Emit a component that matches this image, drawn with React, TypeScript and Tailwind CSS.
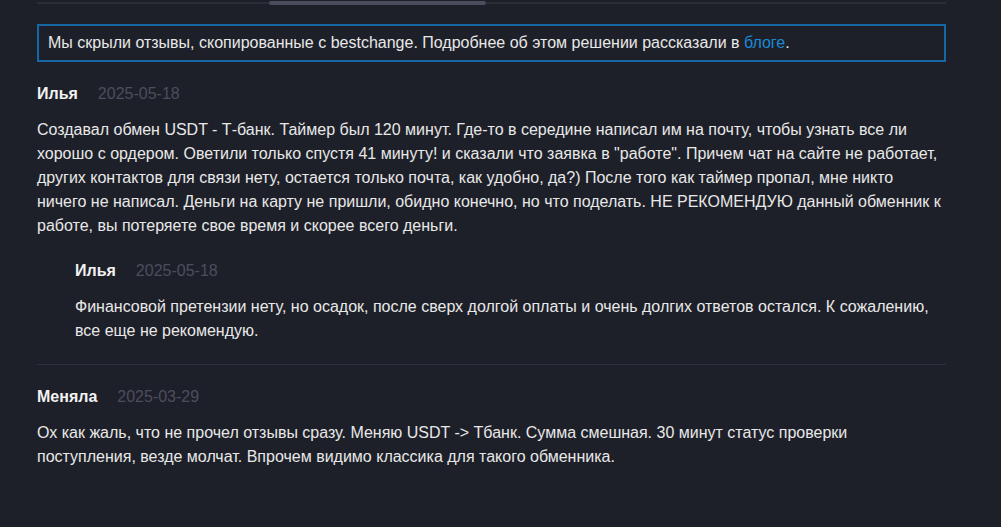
const font = { fontFamily: '"Liberation Sans", Arial, sans-serif' };

type Review = {
  name: string;
  date: string;
  text: string;
  reply?: { name: string; date: string; text: string };
};

const reviews: Review[] = [
  {
    name: "Илья",
    date: "2025-05-18",
    text: 'Создавал обмен USDT - Т-банк. Таймер был 120 минут. Где-то в середине написал им на почту, чтобы узнать все ли хорошо с ордером. Оветили только спустя 41 минуту! и сказали что заявка в "работе". Причем чат на сайте не работает, других контактов для связи нету, остается только почта, как удобно, да?) После того как таймер пропал, мне никто ничего не написал. Деньги на карту не пришли, обидно конечно, но что поделать. НЕ РЕКОМЕНДУЮ данный обменник к работе, вы потеряете свое время и скорее всего деньги.',
    reply: {
      name: "Илья",
      date: "2025-05-18",
      text: "Финансовой претензии нету, но осадок, после сверх долгой оплаты и очень долгих ответов остался. К сожалению, все еще не рекомендую.",
    },
  },
  {
    name: "Меняла",
    date: "2025-03-29",
    text: "Ох как жаль, что не прочел отзывы сразу. Меняю USDT -> Тбанк. Сумма смешная. 30 минут статус проверки поступления, везде молчат. Впрочем видимо классика для такого обменника.",
  },
];

function Head({ name, date }: { name: string; date: string }) {
  return (
    <div className="flex items-center gap-[20px] text-[16px] leading-[24px]">
      <span className="font-bold text-[#f2f2f2]">{name}</span>
      <span className="text-[#4b4e5e]">{date}</span>
    </div>
  );
}

export default function App() {
  return (
    <div className="min-h-[527px] w-[1001px] overflow-hidden bg-[#1e2029]" style={font}>
      <div className="ml-[37px] w-[909px]">
        <div className="relative h-[6px]">
          <div className="absolute left-0 right-0 top-[2px] h-[2px] bg-[#2b2d37]" />
          <div className="absolute left-[232px] top-[1px] h-[4px] w-[217px] rounded-full bg-[#4a4d5b]" />
        </div>

        <div className="mt-[18px] border-2 border-[#1767a6] px-[9px] py-[8px] text-[16px] leading-[18px] text-[#e8e8e8]">
          Мы скрыли отзывы, скопированные с bestchange. Подробнее об этом решении рассказали в{" "}
          <span className="text-[#1a8ad6]">блоге</span>.
        </div>

        {reviews.map((r, i) => (
          <div
            key={i}
            className={i === 0 ? "mt-[20px] pb-[21px] border-b border-[#2e313b]" : "mt-[20px]"}
          >
            <Head name={r.name} date={r.date} />
            <p className="mt-[12px] text-[16px] leading-[24px] text-[#e8e8e8]">{r.text}</p>
            {r.reply && (
              <div className="ml-[38px] mt-[21px]">
                <Head name={r.reply.name} date={r.reply.date} />
                <p className="mt-[12px] text-[16px] leading-[24px] text-[#e8e8e8]">{r.reply.text}</p>
              </div>
            )}
          </div>
        ))}
      </div>
    </div>
  );
}
